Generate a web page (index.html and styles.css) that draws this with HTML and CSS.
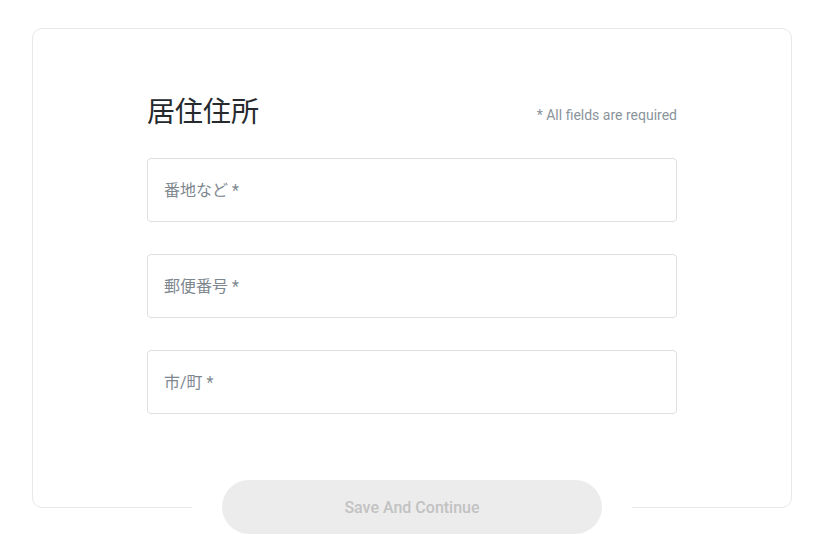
FILE: index.html
```html
<!DOCTYPE html>
<html lang="ja">
<head>
    <meta charset="UTF-8">
    <meta name="viewport" content="width=device-width, initial-scale=1.0">
    <title>居住住所</title>
    <link rel="stylesheet" href="styles.css">
</head>
<body>

    <div class="card">
        <div class="card-head">
            <h2>居住住所</h2>
            <span class="required-note">* All fields are required</span>
        </div>
        <form id="addressForm">
            <input type="text" id="street" name="street" placeholder="番地など *">
            <input type="text" id="postcode" name="postcode" placeholder="郵便番号 *">
            <input type="text" id="city" name="city" placeholder="市/町 *">
        </form>
        <div class="card-foot">
            <div class="foot-mask">
                <button type="submit" form="addressForm" disabled>Save And Continue</button>
            </div>
        </div>
    </div>

</body>
</html>
```

FILE: styles.css
```css
body {
    font-family: Roboto, "Noto Sans CJK JP", sans-serif;
    background-color: #fff;
    margin: 0;
    padding: 28px 31px 50px 32px;
}

.card {
    border: 1px solid #e8e8e8;
    border-radius: 10px;
    padding: 65px 114px 0;
}

.card-head {
    display: flex;
    justify-content: space-between;
    align-items: baseline;
}

h2 {
    margin: 0;
    font-family: "Noto Sans CJK JP", sans-serif;
    font-weight: 400;
    font-size: 28px;
    line-height: 32px;
    color: #262a2d;
}

.required-note {
    font-size: 14px;
    color: #8a949b;
    position: relative;
    top: -2px;
}

form {
    display: flex;
    flex-direction: column;
    gap: 32px;
    margin-top: 32px;
}

input {
    height: 64px;
    padding: 0 16px;
    border: 1px solid #dde0e2;
    border-radius: 4px;
    box-sizing: border-box;
    font-family: Roboto, "Noto Sans CJK JP", sans-serif;
    font-size: 16px;
    color: #333;
    outline: none;
}

input::placeholder {
    color: #7e878f;
}

input:focus {
    border-color: #9aa3aa;
}

.card-foot {
    display: flex;
    justify-content: center;
    margin-top: 66px;
    margin-bottom: -27px;
}

.foot-mask {
    background-color: #fff;
    padding: 0 30px;
}

button {
    width: 380px;
    height: 54px;
    border: none;
    border-radius: 27px;
    background-color: #ececec;
    color: #c2c2c2;
    font-family: Roboto, sans-serif;
    font-size: 16px;
    font-weight: 500;
}
```
